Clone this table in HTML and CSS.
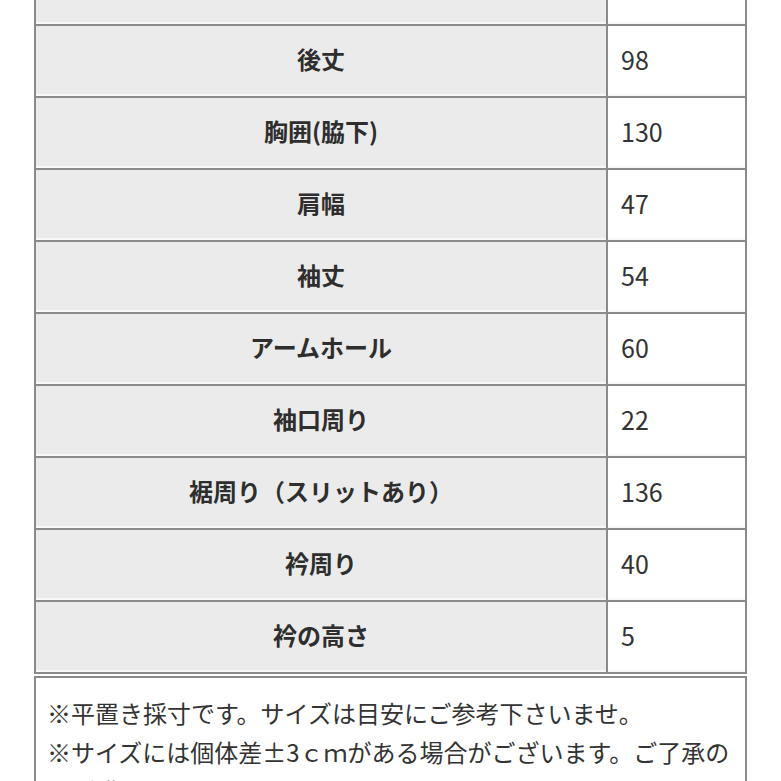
FILE: index.html
```html
<!DOCTYPE html>
<html lang="ja">
<head>
<meta charset="utf-8">
<link rel="stylesheet" href="styles.css">
</head>
<body>
<div class="page">
  <table class="size-table">
    <tbody>
      <tr><th>着丈</th><td>84</td></tr>
      <tr><th>後丈</th><td>98</td></tr>
      <tr><th>胸囲(脇下)</th><td>130</td></tr>
      <tr><th>肩幅</th><td>47</td></tr>
      <tr><th>袖丈</th><td>54</td></tr>
      <tr><th>アームホール</th><td>60</td></tr>
      <tr><th>袖口周り</th><td>22</td></tr>
      <tr><th>裾周り（スリットあり）</th><td>136</td></tr>
      <tr><th>衿周り</th><td>40</td></tr>
      <tr><th>衿の高さ</th><td>5</td></tr>
    </tbody>
  </table>
  <div class="note">
    <p>※平置き採寸です。サイズは目安にご参考下さいませ。</p>
    <p>※サイズには個体差±3ｃｍがある場合がございます。ご了承の上ご購入下さいませ。</p>
  </div>
</div>
</body>
</html>
```
FILE: styles.css
```css
html, body {
  margin: 0;
  padding: 0;
  background: #ffffff;
}
body {
  font-family: "Noto Sans CJK JP", sans-serif;
  color: #333333;
}
.page {
  width: 713px;
  margin-left: 34px;
  margin-top: -48px;
}
.size-table {
  width: 713px;
  border-collapse: collapse;
  border: 2px solid #8a8a8a;
  table-layout: fixed;
}
.size-table tr {
  height: 72px;
}
.size-table th,
.size-table td {
  border: 2px solid #8a8a8a;
  font-size: 24px;
  line-height: 30px;
  padding: 0 0 4px 0;
  box-shadow: inset 0 -2px 0 #f8f8f8;
}
.size-table th {
  width: 570px;
  background: #ebebeb;
  font-weight: 700;
  text-align: center;
  color: #2e2e2e;
}
.size-table td {
  background: #ffffff;
  text-align: left;
  padding-left: 13px;
  font-size: 25px;
  font-weight: 400;
}
.note {
  margin-top: 2px;
  border: 2px solid #8a8a8a;
  padding: 15px 12px 20px 11px;
  font-size: 24px;
  line-height: 39px;
}
.note p {
  margin: 0;
}
```
